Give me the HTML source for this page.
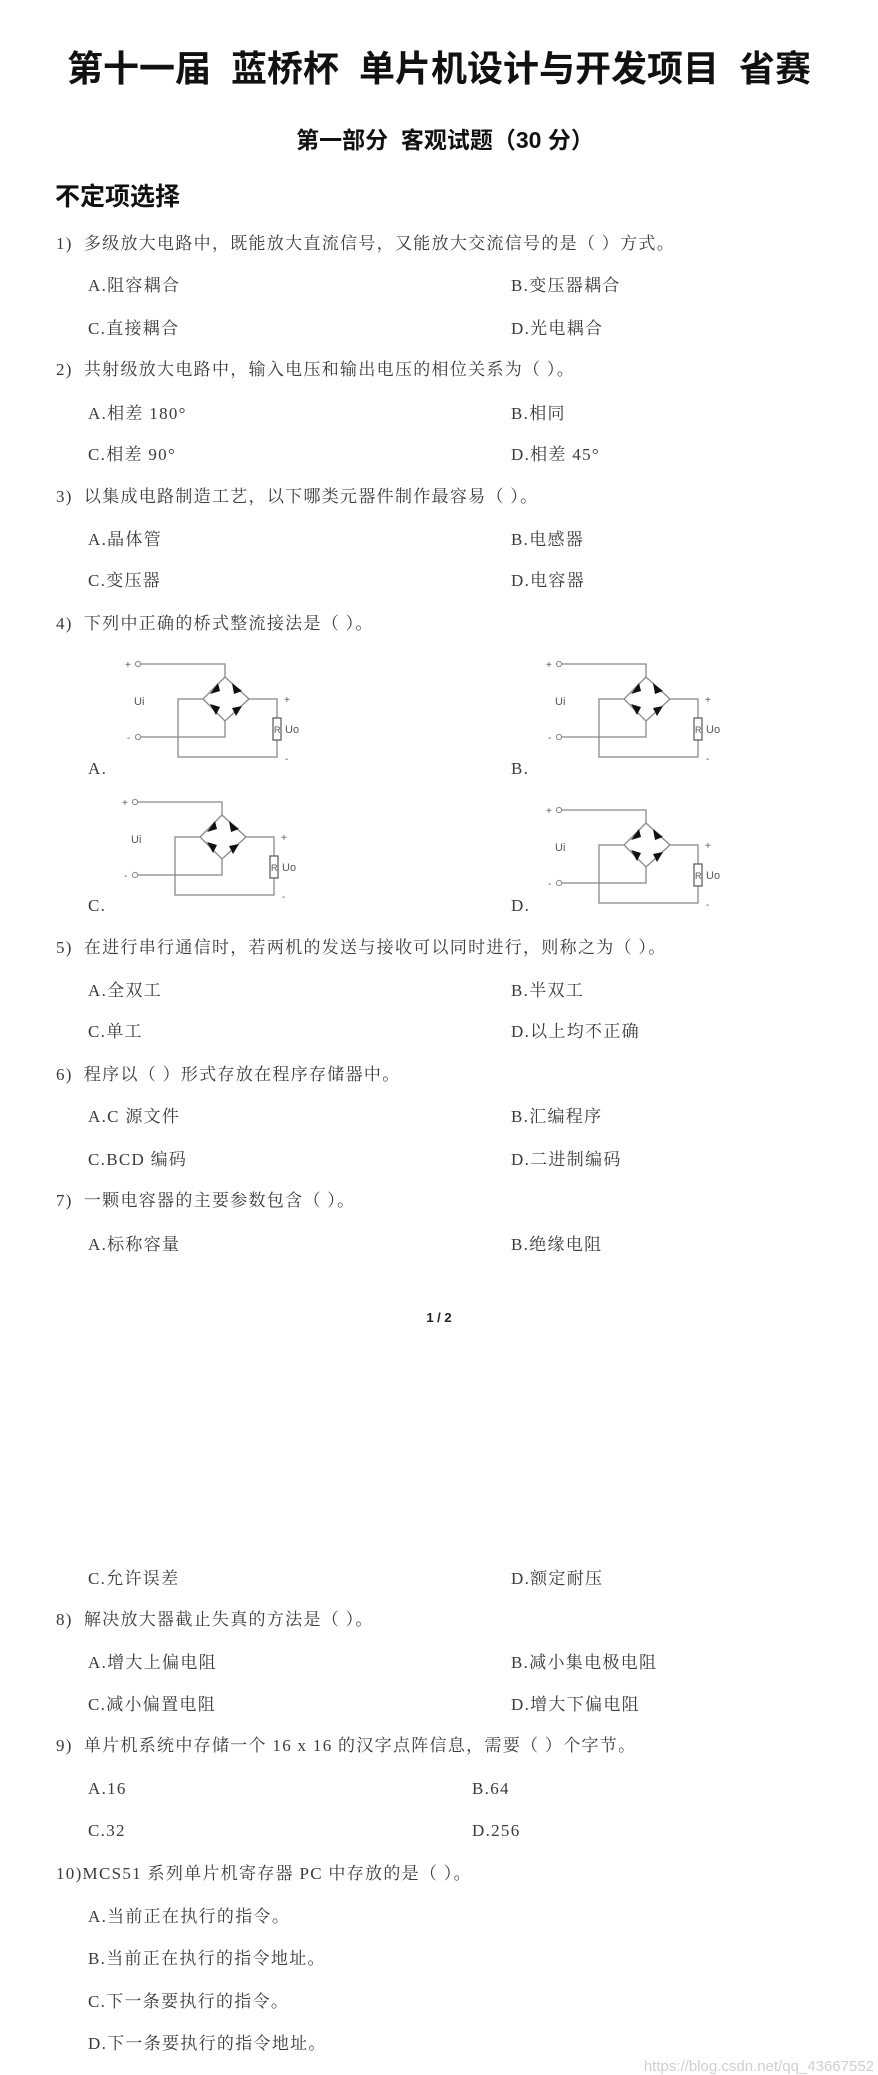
<!DOCTYPE html>
<html><head><meta charset="utf-8"><style>
html,body{margin:0;padding:0;background:#fff;}
body{width:878px;height:2074px;position:relative;overflow:hidden;}
.t{position:absolute;white-space:nowrap;font-family:"Liberation Serif","Noto Serif CJK SC",serif;font-size:17px;letter-spacing:1.3px;color:#3a3a3a;line-height:20px;}
.h{position:absolute;white-space:nowrap;font-family:"Liberation Sans","Noto Sans CJK SC",sans-serif;font-weight:bold;color:#111;}
svg text{font-family:"Liberation Sans",sans-serif;fill:#555;}
</style></head><body>
<div class="h" style="left:0;width:878px;text-align:center;top:48px;font-size:36px;line-height:42px;">第十一届&nbsp;&nbsp;蓝桥杯&nbsp;&nbsp;单片机设计与开发项目&nbsp;&nbsp;省赛</div>
<div class="h" style="left:0;width:890px;text-align:center;top:126px;font-size:23px;line-height:28px;">第一部分&nbsp;&nbsp;客观试题（30 分）</div>
<div class="h" style="left:55px;top:182px;font-size:25px;line-height:30px;">不定项选择</div>

<div class="t" style="left:56px;top:234px">1)&nbsp;&nbsp;多级放大电路中，既能放大直流信号，又能放大交流信号的是（ ）方式。</div>
<div class="t" style="left:88px;top:276px">A.阻容耦合</div><div class="t" style="left:511px;top:276px">B.变压器耦合</div>
<div class="t" style="left:88px;top:319px">C.直接耦合</div><div class="t" style="left:511px;top:319px">D.光电耦合</div>

<div class="t" style="left:56px;top:360px">2)&nbsp;&nbsp;共射级放大电路中，输入电压和输出电压的相位关系为（ ）。</div>
<div class="t" style="left:88px;top:404px">A.相差 180°</div><div class="t" style="left:511px;top:404px">B.相同</div>
<div class="t" style="left:88px;top:445px">C.相差 90°</div><div class="t" style="left:511px;top:445px">D.相差 45°</div>

<div class="t" style="left:56px;top:487px">3)&nbsp;&nbsp;以集成电路制造工艺，以下哪类元器件制作最容易（ ）。</div>
<div class="t" style="left:88px;top:530px">A.晶体管</div><div class="t" style="left:511px;top:530px">B.电感器</div>
<div class="t" style="left:88px;top:571px">C.变压器</div><div class="t" style="left:511px;top:571px">D.电容器</div>

<div class="t" style="left:56px;top:614px">4)&nbsp;&nbsp;下列中正确的桥式整流接法是（ ）。</div>
<div class="t" style="left:88px;top:759px">A.</div><div class="t" style="left:511px;top:759px">B.</div>
<div class="t" style="left:88px;top:896px">C.</div><div class="t" style="left:511px;top:896px">D.</div>

<svg style="position:absolute;left:0;top:0" width="878" height="1000">
<defs>
<g id="c">
<path d="M141,664H225V677M225,677L203,699L225,721L249,699Z M203,699H178V757H277V740 M277,718V699H249 M141,737H225V721" fill="none" stroke="#888" stroke-width="1.3"/>
<circle cx="138" cy="664" r="2.6" fill="#fff" stroke="#888"/>
<circle cx="138" cy="737" r="2.6" fill="#fff" stroke="#888"/>
<rect x="273" y="718" width="8" height="22" fill="#fff" stroke="#555" stroke-width="1.2"/>
<text x="274" y="733" font-size="9">R</text>
<text x="125" y="668" font-size="10">+</text>
<text x="127" y="741" font-size="10">-</text>
<text x="134" y="705" font-size="11">Ui</text>
<text x="284" y="703" font-size="10">+</text>
<text x="285" y="733" font-size="11">Uo</text>
<text x="285" y="762" font-size="10">-</text>
<g fill="#111">
<path d="M210,694L218,683L220,691Z"/>
<path d="M232,683L242,691L234,694Z"/>
<path d="M210,704L220,707L216,715Z"/>
<path d="M242,706L236,716L232,708Z"/>
</g>
</g>
</defs>
<use href="#c"/>
<use href="#c" transform="translate(421,0)"/>
<use href="#c" transform="translate(-3,138)"/>
<use href="#c" transform="translate(421,146)"/>
</svg>

<div class="t" style="left:56px;top:938px">5)&nbsp;&nbsp;在进行串行通信时，若两机的发送与接收可以同时进行，则称之为（ ）。</div>
<div class="t" style="left:88px;top:981px">A.全双工</div><div class="t" style="left:511px;top:981px">B.半双工</div>
<div class="t" style="left:88px;top:1022px">C.单工</div><div class="t" style="left:511px;top:1022px">D.以上均不正确</div>

<div class="t" style="left:56px;top:1065px">6)&nbsp;&nbsp;程序以（ ）形式存放在程序存储器中。</div>
<div class="t" style="left:88px;top:1107px">A.C 源文件</div><div class="t" style="left:511px;top:1107px">B.汇编程序</div>
<div class="t" style="left:88px;top:1150px">C.BCD 编码</div><div class="t" style="left:511px;top:1150px">D.二进制编码</div>

<div class="t" style="left:56px;top:1191px">7)&nbsp;&nbsp;一颗电容器的主要参数包含（ ）。</div>
<div class="t" style="left:88px;top:1235px">A.标称容量</div><div class="t" style="left:511px;top:1235px">B.绝缘电阻</div>

<div class="h" style="left:0;width:878px;text-align:center;top:1310px;font-size:13px;line-height:16px;color:#222">1 / 2</div>

<div class="t" style="left:88px;top:1569px">C.允许误差</div><div class="t" style="left:511px;top:1569px">D.额定耐压</div>

<div class="t" style="left:56px;top:1610px">8)&nbsp;&nbsp;解决放大器截止失真的方法是（ ）。</div>
<div class="t" style="left:88px;top:1653px">A.增大上偏电阻</div><div class="t" style="left:511px;top:1653px">B.减小集电极电阻</div>
<div class="t" style="left:88px;top:1695px">C.减小偏置电阻</div><div class="t" style="left:511px;top:1695px">D.增大下偏电阻</div>

<div class="t" style="left:56px;top:1736px">9)&nbsp;&nbsp;单片机系统中存储一个 16 x 16 的汉字点阵信息，需要（ ）个字节。</div>
<div class="t" style="left:88px;top:1779px">A.16</div><div class="t" style="left:472px;top:1779px">B.64</div>
<div class="t" style="left:88px;top:1821px">C.32</div><div class="t" style="left:472px;top:1821px">D.256</div>

<div class="t" style="left:56px;top:1864px">10)MCS51 系列单片机寄存器 PC 中存放的是（ ）。</div>
<div class="t" style="left:88px;top:1907px">A.当前正在执行的指令。</div>
<div class="t" style="left:88px;top:1949px">B.当前正在执行的指令地址。</div>
<div class="t" style="left:88px;top:1992px">C.下一条要执行的指令。</div>
<div class="t" style="left:88px;top:2034px">D.下一条要执行的指令地址。</div>

<div style="position:absolute;right:4px;top:2058px;font-family:'Liberation Sans',sans-serif;font-size:15px;color:#cfcfcf;">https://blog.csdn.net/qq_43667552</div>
</body></html>
